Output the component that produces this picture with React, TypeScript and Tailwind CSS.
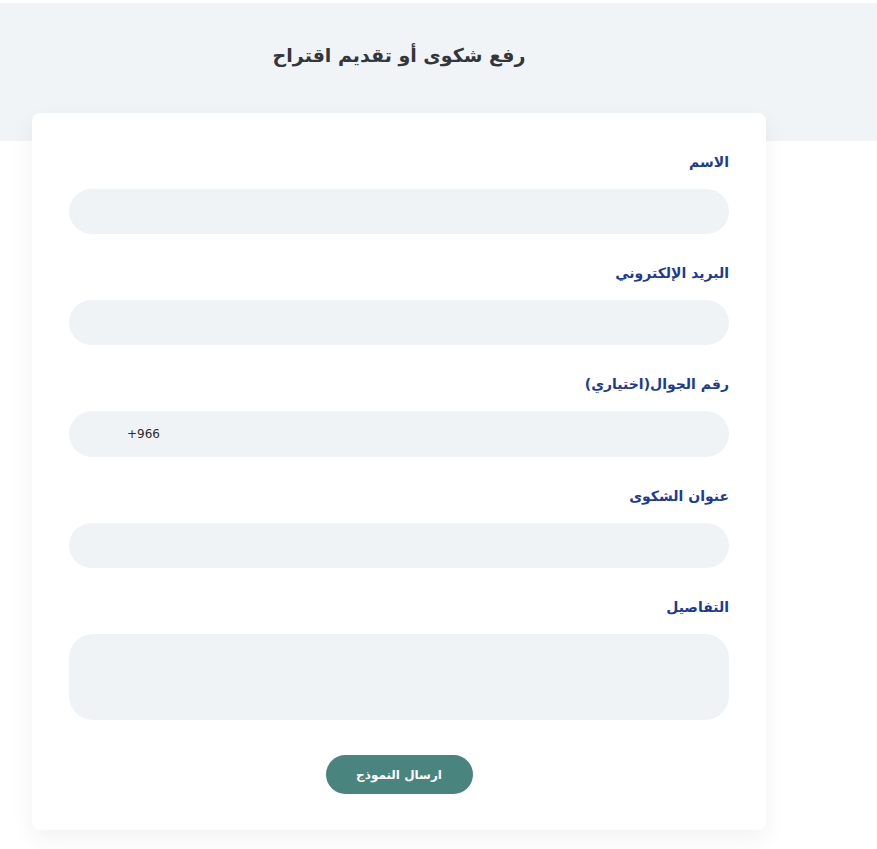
import React from "react"

const fields = [
  { label: "الاسم", type: "text" },
  { label: "البريد الإلكتروني", type: "email" },
  { label: "رقم الجوال(اختياري)", type: "phone" },
  { label: "عنوان الشكوى", type: "text" },
]

export default function App() {
  return (
    <div
      className="min-h-screen bg-white pt-[3px]"
      style={{ fontFamily: '"DejaVu Sans", "Noto Sans", sans-serif' }}
    >
      {/* ترويسة */}
      <div className="bg-[#f1f4f7] h-[138px] pt-[38px]">
        <h1 dir="rtl" className="w-[798px] text-center text-[19px] font-bold text-[#33363b]">رفع شكوى أو تقديم اقتراح</h1>
      </div>

      <div dir="rtl" className="w-[798px]">
        {/* النموذج */}
        <div className="relative -mt-[28px] mx-[32px] mb-[19px] rounded-lg bg-white px-[37px] pt-[39px] pb-[36px] shadow-[0_8px_24px_rgba(0,0,0,0.06)]">
          {fields.map((f) => (
            <div key={f.label} className="mb-[29px]">
              <label className="block text-[14px] font-bold text-[#1d3b94] mb-[17px] leading-[20px]">{f.label}</label>
              {f.type === "phone" ? (
                <div className="h-[46px] rounded-full bg-[#f0f3f6] flex items-center justify-end pl-[58px]">
                  <span dir="ltr" className="text-[12px] text-[#2b2b2b]">+966</span>
                </div>
              ) : (
                <div className="h-[45px] rounded-full bg-[#f0f3f6]" />
              )}
            </div>
          ))}

          <div>
            <label className="block text-[14px] font-bold text-[#1d3b94] mb-[17px] leading-[20px]">التفاصيل</label>
            <div className="h-[86px] rounded-[24px] bg-[#f0f3f6]" />
          </div>

          <div className="flex justify-center mt-[35px]">
            <button className="w-[147px] h-[39px] rounded-full bg-[#4a847f] text-white text-[12px] font-bold">
              ارسال النموذج
            </button>
          </div>
        </div>
      </div>
    </div>
  )
}
